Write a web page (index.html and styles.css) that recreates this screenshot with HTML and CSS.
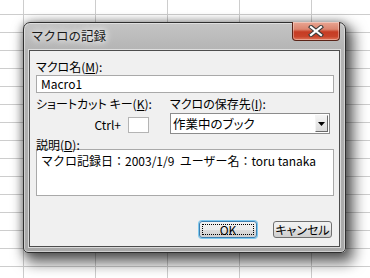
FILE: index.html
```html
<!DOCTYPE html>
<html>
    <head>
        <title>マクロの記録</title>
        <link rel="stylesheet" href="styles.css">
    </head>
    <body>
        <div class="dialog">
            <div class="titlebar">
                <span class="title">マクロの記録</span>
                <div class="close">
                    <svg width="16" height="12" viewBox="0 0 16 12">
                        <path d="M3 2 L13 10 M13 2 L3 10" stroke="#3b3b3b" stroke-width="4.2" stroke-linecap="square"/>
                        <path d="M3 2 L13 10 M13 2 L3 10" stroke="#ffffff" stroke-width="2.2" stroke-linecap="square"/>
                    </svg>
                </div>
            </div>
            <div class="client">
                <div class="label">マクロ名(<u>M</u>):</div>
                <div class="field name">Macro1</div>
                <div class="row">
                    <div class="col-left">
                        <div class="label">ショートカット キー(<u>K</u>):</div>
                        <div class="ctrl">
                            <span>Ctrl+</span>
                            <span class="keybox"></span>
                        </div>
                    </div>
                    <div class="col-right">
                        <div class="label">マクロの保存先(<u>I</u>):</div>
                        <div class="combo">
                            <span class="combo-text">作業中のブック</span>
                            <span class="drop">
                                <svg width="7" height="4" viewBox="0 0 7 4"><path d="M0 0 H7 L3.5 4 Z" fill="#000"/></svg>
                            </span>
                        </div>
                    </div>
                </div>
                <div class="label desc">説明(<u>D</u>):</div>
                <div class="field memo">マクロ記録日：2003/1/9&nbsp;&nbsp;ユーザー名：toru tanaka</div>
                <div class="buttons">
                    <div class="btn ok"><span class="focus">OK</span></div>
                    <div class="btn">キャンセル</div>
                </div>
            </div>
        </div>
    </body>
</html>
```

FILE: styles.css
```css
body {
    margin: 0;
    width: 370px;
    height: 278px;
    overflow: hidden;
    background-color: #ffffff;
    background-image:
        linear-gradient(to right, #cdcdcd 1px, transparent 1px),
        linear-gradient(to bottom, #cdcdcd 1px, transparent 1px);
    background-size: 72px 18px;
    background-position: 23px 14px;
    font-family: "Noto Sans CJK JP", "Noto Sans", sans-serif;
    font-size: 12px;
    color: #000;
}
.dialog {
    margin: 22px 0 0 23px;
    width: 323px;
    height: 231px;
    box-sizing: border-box;
    border: 1px solid #2e2e2e;
    border-radius: 7px 7px 5px 5px;
    background: linear-gradient(to bottom, #c4c4c4 0, #b4b4b4 28px, #a8a8a8 100%);
    box-shadow: inset 0 0 0 1px rgba(255,255,255,0.45), 5px 7px 14px 3px rgba(0,0,0,0.6), 0 0 8px rgba(0,0,0,0.35);
    display: flex;
    flex-direction: column;
}
.titlebar {
    height: 27px;
    display: flex;
    align-items: flex-start;
    padding-left: 7px;
}
.title {
    margin-top: 5px;
    font-size: 12.5px;
    line-height: 15px;
    color: #1a1a1a;
    text-shadow: 0 0 6px #fff, 0 0 10px #fff;
}
.close {
    margin-left: auto;
    margin-right: 5px;
    margin-top: -1px;
    width: 48px;
    height: 19px;
    box-sizing: border-box;
    border: 1px solid #5a2418;
    border-top: none;
    border-radius: 0 0 4px 4px;
    background: linear-gradient(to bottom, #e9a592 0, #dc8670 40%, #c63c24 55%, #c8432a 80%, #e0765a 100%);
    box-shadow: inset 0 0 0 1px rgba(255,255,255,0.35);
    display: flex;
    align-items: center;
    justify-content: center;
}
.client {
    margin: 0 5px 5px 5px;
    flex: 1;
    border: 1px solid #4d4d4d;
    box-shadow: 0 0 0 1px rgba(255,255,255,0.55);
    background: #f0f0f0;
    padding: 10px 5px 0 6px;
    font-feature-settings: "palt";
}
.label {
    line-height: 12px;
    height: 12px;
    white-space: nowrap;
}
u {
    text-decoration-thickness: 1px;
    text-underline-offset: 1px;
}
.field {
    background: #fff;
    border: 1px solid #a9a9a9;
    box-sizing: border-box;
    padding: 0 4px;
    line-height: 15px;
}
.name {
    margin-top: 2px;
    height: 18px;
    font-feature-settings: normal;
}
.row {
    display: flex;
    margin-top: 5px;
}
.col-left {
    width: 134px;
}
.ctrl {
    margin-top: 7px;
    width: 113px;
    display: flex;
    justify-content: flex-end;
    align-items: center;
    gap: 7px;
    line-height: 16px;
}
.keybox {
    width: 21px;
    height: 16px;
    box-sizing: border-box;
    border: 1px solid #b4b4b4;
    background: #fff;
}
.combo {
    margin-top: 3px;
    width: 160px;
    height: 21px;
    box-sizing: border-box;
    border: 1px solid #8c8c8c;
    background: #fff;
    display: flex;
    align-items: center;
    justify-content: space-between;
    padding: 0 1px 0 2px;
}
.combo-text {
    line-height: 16px;
    font-size: 12.5px;
}
.drop {
    width: 13px;
    height: 17px;
    box-sizing: border-box;
    border: 1px solid;
    border-color: #f4f4f4 #6a6a6a #6a6a6a #f4f4f4;
    background: linear-gradient(to bottom, #f4f4f4, #dcdcdc);
    display: flex;
    align-items: center;
    justify-content: center;
}
.desc {
    margin-top: 5px;
}
.memo {
    margin-top: -2px;
    height: 47px;
    padding-top: 3px;
    font-feature-settings: normal;
    white-space: nowrap;
}
.buttons {
    margin-top: 25px;
    display: flex;
    justify-content: flex-end;
    gap: 16px;
    padding-right: 2px;
}
.btn {
    width: 59px;
    height: 17px;
    box-sizing: border-box;
    border: 1px solid #707070;
    border-radius: 3px;
    background: linear-gradient(to bottom, #f2f2f2 0, #ebebeb 50%, #dddddd 51%, #cfcfcf 100%);
    display: flex;
    align-items: center;
    justify-content: center;
    line-height: 13px;
}
.ok {
    width: 58px;
    border-color: #3c7fb1;
    box-shadow: 0 0 0 1px #7ec9ef;
    padding: 2px;
}
.focus {
    flex: 1;
    align-self: stretch;
    border: 1px dotted #000;
    text-align: center;
    line-height: 9px;
}
```
